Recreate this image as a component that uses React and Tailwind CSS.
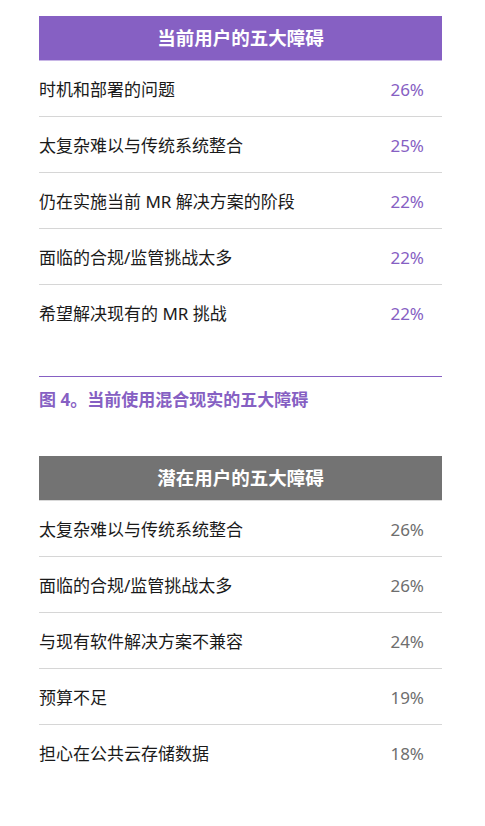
import React from 'react';

const current = [
  { label: '时机和部署的问题', value: '26%' },
  { label: '太复杂难以与传统系统整合', value: '25%' },
  { label: '仍在实施当前 MR 解决方案的阶段', value: '22%' },
  { label: '面临的合规/监管挑战太多', value: '22%' },
  { label: '希望解决现有的 MR 挑战', value: '22%' },
];

const potential = [
  { label: '太复杂难以与传统系统整合', value: '26%' },
  { label: '面临的合规/监管挑战太多', value: '26%' },
  { label: '与现有软件解决方案不兼容', value: '24%' },
  { label: '预算不足', value: '19%' },
  { label: '担心在公共云存储数据', value: '18%' },
];

const font = { fontFamily: '"Noto Sans", "Noto Sans CJK SC", sans-serif' };

const Table = ({ title, rows, headerClass, lineClass, valueClass }) => (
  <div>
    <div className={`h-[45px] flex items-center justify-center text-white text-[18.5px] font-bold border-b ${headerClass} ${lineClass}`}>
      {title}
    </div>
    {rows.map((r, i) => (
      <div
        key={i}
        className={`h-[56px] flex items-center justify-between pt-[2px] pr-[18px] ${i < rows.length - 1 ? 'border-b border-[#d6d6d6]' : ''}`}
      >
        <span className="text-[17px] text-[#1a1a1a]">{r.label}</span>
        <span className={`text-[17px] ${valueClass}`}>{r.value}</span>
      </div>
    ))}
  </div>
);

export default function App() {
  return (
    <div className="w-[485px] h-[826px] bg-white pt-4 pl-[39px] pr-[43px]" style={font}>
      <Table
        title="当前用户的五大障碍"
        rows={current}
        headerClass="bg-[#8660c3]"
        lineClass="border-[#c8b6e6]"
        valueClass="text-[#8660c3]"
      />
      <div className="mt-[35px] border-t border-[#8660c3] pt-[10px]">
        <p className="text-[17px] leading-[26px] font-bold text-[#8660c3]">图 4。当前使用混合现实的五大障碍</p>
      </div>
      <div className="mt-[43px]">
        <Table
          title="潜在用户的五大障碍"
          rows={potential}
          headerClass="bg-[#737373]"
          lineClass="border-[#d9d9d9]"
          valueClass="text-[#6e6e6e]"
        />
      </div>
    </div>
  );
}
